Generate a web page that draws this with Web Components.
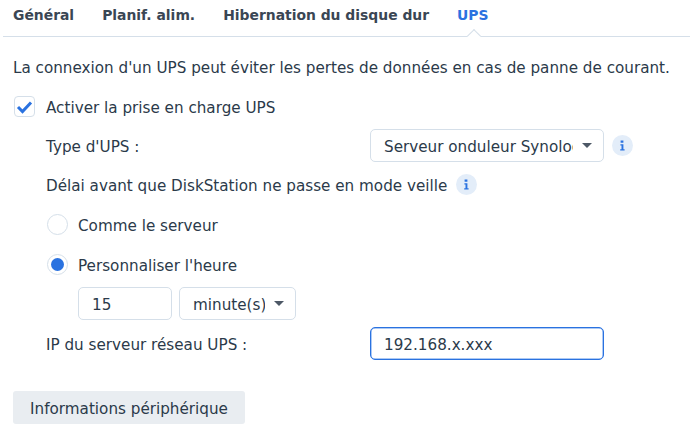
<!DOCTYPE html>
<html lang="fr">
<head>
<meta charset="utf-8">
<title>UPS</title>
<style>
  html, body { margin: 0; background: #fff; }
  body { font: 15.2px "DejaVu Sans", sans-serif; color: #2b3a4a; width: 690px; height: 442px; overflow: hidden; }
</style>
</head>
<body>
<ups-panel></ups-panel>

<script>
const INFO_ICON = `<svg width="21" height="21" viewBox="0 0 21 21"><circle cx="10.5" cy="10.5" r="10.5" fill="#e3edf9"/><path d="M8.6 5.6h2.8v2.2H8.6zM8.4 9.2h3v5h1.2v1.4H8.2v-1.4h1.3v-3.6H8.4z" fill="#2a72e0"/></svg>`;

class TabBar extends HTMLElement {
  constructor() {
    super();
    this.attachShadow({ mode: "open" }).innerHTML = `
      <style>
        :host { display: flex; height: 36px; margin-left: 3px; border-bottom: 1px solid #d5dfe9; gap: 28px; padding-left: 10px; font-weight: 700; font-size: 13.9px; color: #3a4654; position: relative; }
        span { line-height: 31px; }
        .on { color: #2a72e0; }
        .on::after { content: ""; position: absolute; left: 466px; top: 31px; width: 9px; height: 9px; background: #fff; border-left: 1px solid #d5dfe9; border-top: 1px solid #d5dfe9; transform: rotate(45deg); }
      </style>
      <span>Général</span><span>Planif. alim.</span><span>Hibernation du disque dur</span><span class="on">UPS</span>`;
  }
}

class FormSelect extends HTMLElement {
  constructor() {
    super();
    this.attachShadow({ mode: "open" }).innerHTML = `
      <style>
        :host { display: flex; align-items: center; box-sizing: border-box; height: 33px; padding: 0 11px 0 13px; border: 1px solid #d5dfe9; border-radius: 5px; background: #fff; }
        div { flex: 1; min-width: 0; overflow: hidden; white-space: nowrap; padding-top: 2px; }
        i { flex: none; width: 0; height: 0; margin-left: 9px; border: 5px solid transparent; border-top: 5px solid #4d5866; border-bottom: 0; }
      </style>
      <div><slot></slot></div><i></i>`;
  }
}

class FormInput extends HTMLElement {
  constructor() {
    super();
    this.attachShadow({ mode: "open" }).innerHTML = `
      <style>
        :host { display: flex; align-items: center; box-sizing: border-box; height: 33px; padding: 2px 13px 0; border: 1px solid #d5dfe9; border-radius: 5px; background: #fff; }
        :host([focused]) { border-color: #2a72e0; box-shadow: inset 0 0 0 .5px #5b94ea; }
      </style>
      <slot></slot>`;
  }
}

class FormRadio extends HTMLElement {
  constructor() {
    super();
    this.attachShadow({ mode: "open" }).innerHTML = `
      <style>
        :host { display: flex; align-items: center; gap: 10px; height: 21px; margin-left: 47px; }
        b { box-sizing: border-box; width: 21px; height: 21px; border: 1px solid #d5dfe9; border-radius: 50%; display: grid; place-items: center; }
        :host([checked]) b::after { content: ""; width: 13px; height: 13px; border-radius: 50%; background: #2a72e0; }
        span { padding-top: 2px; }
      </style>
      <b></b><span><slot></slot></span>`;
  }
}

class UpsPanel extends HTMLElement {
  constructor() {
    super();
    this.attachShadow({ mode: "open" }).innerHTML = `
      <style>
        :host { display: block; height: 442px; }
        .intro { margin: 22px 0 0 13px; line-height: 18px; white-space: nowrap; }
        .check { display: flex; align-items: center; gap: 11px; margin: 19px 0 0 14px; height: 21px; }
        .check .txt, .lab, .delay .txt { padding-top: 2px; }
        .box { box-sizing: border-box; width: 21px; height: 21px; border: 1px solid #d5dfe9; border-radius: 4px; display: grid; place-items: center; }
        .row { display: flex; align-items: center; margin-left: 46px; height: 33px; }
        .row .lab { width: 324px; }
        .row form-select, .row form-input { width: 234px; }
        .info { display: block; height: 21px; margin-left: 8px; }
        .type { margin-top: 12px; }
        .delay { display: flex; align-items: center; gap: 9px; margin: 12px 0 0 46px; height: 21px; }
        .r1 { margin-top: 19px; }
        .r2 { margin-top: 19px; }
        .time { display: flex; gap: 7px; margin: 12px 0 0 78px; }
        .time form-input { width: 94px; }
        .time form-select { width: 117px; }
        .ip { margin-top: 7px; }
        button { display: block; box-sizing: border-box; font: inherit; color: inherit; width: 232px; height: 33px; margin: 31px 0 0 13px; padding: 2px 0 0; border: 0; border-radius: 3px; background: #e9edf1; }
      </style>
      <tab-bar></tab-bar>
      <div class="intro">La connexion d'un UPS peut éviter les pertes de données en cas de panne de courant.</div>
      <div class="check">
        <span class="box"><svg width="17" height="14" viewBox="0 0 17 14"><path d="M2 7l4.5 4.5L15 2.5" fill="none" stroke="#2a72e0" stroke-width="3"/></svg></span>
        <span class="txt">Activer la prise en charge UPS</span>
      </div>
      <div class="row type"><span class="lab">Type d'UPS :</span><form-select>Serveur onduleur Synology</form-select><span class="info">${INFO_ICON}</span></div>
      <div class="delay"><span class="txt">Délai avant que DiskStation ne passe en mode veille</span><span class="info" style="margin:0">${INFO_ICON}</span></div>
      <form-radio class="r1">Comme le serveur</form-radio>
      <form-radio class="r2" checked>Personnaliser l'heure</form-radio>
      <div class="time"><form-input>15</form-input><form-select>minute(s)</form-select></div>
      <div class="row ip"><span class="lab">IP du serveur réseau UPS :</span><form-input focused>192.168.x.xxx</form-input></div>
      <button>Informations périphérique</button>`;
  }
}

customElements.define("tab-bar", TabBar);
customElements.define("form-select", FormSelect);
customElements.define("form-input", FormInput);
customElements.define("form-radio", FormRadio);
customElements.define("ups-panel", UpsPanel);
</script>
</body>
</html>
